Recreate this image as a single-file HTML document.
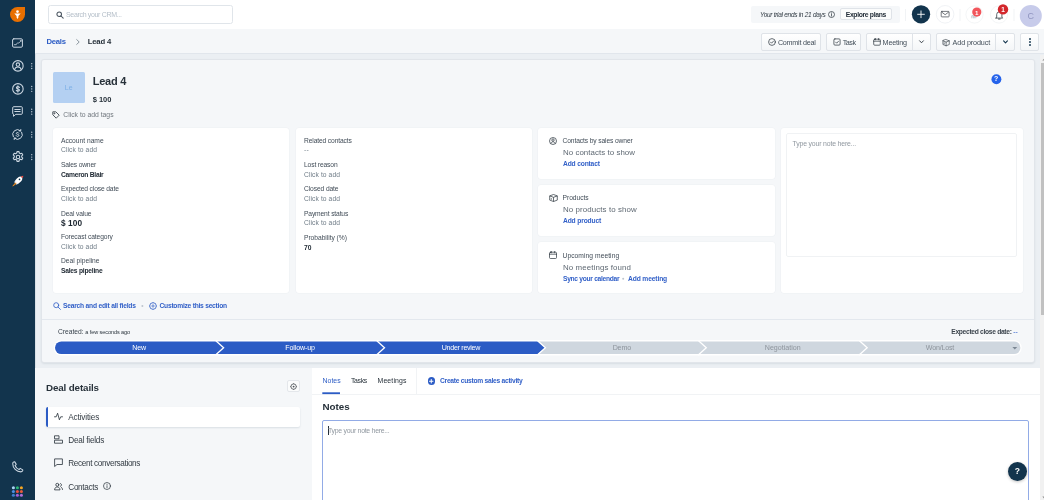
<!DOCTYPE html>
<html lang="en"><head>
<meta charset="utf-8">
<title>Lead 4 - Deals</title>
<style>
*{box-sizing:border-box;margin:0;padding:0}
html,body{width:1044px;height:500px;overflow:hidden;background:#ebeff3}
body{font-family:"Liberation Sans",sans-serif;color:#12344d;position:relative;font-size:7px;line-height:1}
.a{position:absolute}
.t{position:absolute;white-space:nowrap;line-height:10px;height:10px}
svg{position:absolute;overflow:visible}
#root{position:absolute;left:0;top:0;width:1044px;height:500px;overflow:hidden;will-change:transform}
/* sidebar */
#side{left:0;top:0;width:35px;height:500px;background:#12344d;box-shadow:1px 0 0 rgba(18,52,77,.08)}
#side svg{stroke:#cdd8e3;fill:none;stroke-width:1;stroke-linecap:round;stroke-linejoin:round}
/* top bar */
#top{left:35px;top:0;width:1009px;height:29px;background:#fff}
#search{left:48.3px;top:5px;width:184.7px;height:18.5px;border:1px solid #e0e5ea;border-radius:2.5px;background:#fff}
#crumb{left:35px;top:29px;width:1009px;height:24.5px;background:#f5f7f9;border-bottom:1px solid #e1e6ec}
.btn{position:absolute;top:33px;height:17.6px;border:1px solid #dfe3e8;border-radius:2px;background:#f8f9fa;background:linear-gradient(#fff,#f4f6f8)}
.btn .t{top:3.8px;font-size:7.2px;color:#434e59}
/* main card */
#card{left:42px;top:60px;width:992px;height:302px;background:#f5f7f9;border-radius:2px;box-shadow:0 0 0 1px #e1e5ea,0 1px 2.5px rgba(18,52,77,.22)}
.wc{position:absolute;background:#fff;border-radius:3px;box-shadow:0 0 0 .6px #eef1f4}
.lab{font-size:6.7px;color:#414c57}
.val{font-size:6.7px;color:#6f7c87}
.bval{font-size:6.7px;color:#1c2630;font-weight:bold}
.emp{font-size:7.9px;color:#5f6973}
.lnk{font-size:6.7px;color:#3260c8;font-weight:bold}
.ph{font-size:6.9px;color:#8f979f}
.stg{position:absolute;top:342.4px;height:12.7px;line-height:12.7px;text-align:center;font-size:7.1px;color:#fff;white-space:nowrap}
.stg.g{color:#8d949c}
.li{font-size:8.2px;color:#333b43}
</style>
</head>
<body>
<div id="root">
<!-- ============ SIDEBAR ============ -->
<div id="side" class="a">
  <!-- logo -->
  <svg style="left:10px;top:7px" width="15" height="15" viewBox="0 0 15 15"><path d="M7.5 0H15V7.5A7.5 7.5 0 1 1 7.5 0Z" fill="#e86f00" stroke="none"></path><circle cx="7.5" cy="4.6" r="1.3" fill="#fff" stroke="none"></circle><path d="M4.3 6.6h6.4L8.4 9v1.4L7.5 12l-.9-1.6V9Z" fill="#fff" stroke="none"></path></svg>
  <!-- dashboard -->
  <svg style="left:12px;top:38px" width="11" height="10" viewBox="0 0 11 10"><rect x=".6" y=".8" width="9.8" height="8.4" rx="1.2"></rect><path d="M2.5 6.7h1.4M4.3 6.2l1.2-1.1h1.2l1.3-1.3" stroke-width=".85"></path><circle cx="8.7" cy="2.9" r=".45" stroke-width=".8"></circle></svg>
  <!-- contacts -->
  <svg style="left:11.6px;top:60.1px" width="11.8" height="11.8" viewBox="0 0 11 11"><circle cx="5.5" cy="5.5" r="4.9"></circle><circle cx="5.5" cy="4.3" r="1.6"></circle><path d="M2.4 9c.4-1.7 1.6-2.5 3.1-2.5S8.2 7.3 8.6 9"></path></svg>
  <!-- deals -->
  <svg style="left:11.6px;top:82.9px" width="11.8" height="11.8" viewBox="0 0 11 11"><circle cx="5.5" cy="5.5" r="4.9"></circle><path d="M6.9 4.1c-.3-.6-.8-.8-1.4-.8-.8 0-1.4.4-1.4 1.1 0 1.5 2.9.7 2.9 2.2 0 .7-.7 1.1-1.5 1.1-.7 0-1.2-.3-1.5-.9M5.5 2.5v6"></path></svg>
  <!-- chat -->
  <svg style="left:12px;top:106px" width="11" height="11" viewBox="0 0 11 11"><path d="M.7 1.6a.9.9 0 0 1 .9-.9h7.8a.9.9 0 0 1 .9.9v5.8a.9.9 0 0 1-.9.9H3.8L1.5 10.3V8.3a.9.9 0 0 1-.8-.9Z"></path><path d="M2.8 3.5h5.4M2.8 5.5h5.4"></path></svg>
  <!-- automation -->
  <svg style="left:12px;top:129px" width="11" height="11" viewBox="0 0 11 11"><path d="M1.3 7.8A4.8 4.8 0 0 1 8.6 1.8M9.7 3.2A4.8 4.8 0 0 1 2.4 9.2"></path><path d="M8.8.5l-.1 1.5-1.5-.1M2.2 10.5l.1-1.5 1.5.1"></path><path d="M6.8 4.2c-.3-.5-.7-.7-1.3-.7-.7 0-1.2.4-1.2.9 0 1.3 2.6.6 2.6 2 0 .6-.6 1-1.4 1-.6 0-1.1-.3-1.4-.8"></path></svg>
  <!-- settings -->
  <svg style="left:11.5px;top:151.2px" width="12" height="12" viewBox="0 0 11 11" stroke-width=".95"><path d="M4.6.6h1.8l.3 1.3 1 .6 1.3-.4.9 1.5-1 .9v1.1l1 .9-.9 1.5-1.3-.4-1 .6-.3 1.3H4.6l-.3-1.3-1-.6-1.3.4-.9-1.5 1-.9V4.5l-1-.9.9-1.5 1.3.4 1-.6Z"></path><circle cx="5.5" cy="5.5" r="1.6"></circle></svg>
  <svg style="left:0;top:0" width="35" height="500" viewBox="0 0 35 500"><g stroke="none" fill="#b4c1ce"><circle cx="31.7" cy="63.65" r=".72"></circle><circle cx="31.7" cy="66.10" r=".72"></circle><circle cx="31.7" cy="68.55" r=".72"></circle><circle cx="31.7" cy="86.45" r=".72"></circle><circle cx="31.7" cy="88.90" r=".72"></circle><circle cx="31.7" cy="91.35" r=".72"></circle><circle cx="31.7" cy="109.25" r=".72"></circle><circle cx="31.7" cy="111.70" r=".72"></circle><circle cx="31.7" cy="114.15" r=".72"></circle><circle cx="31.7" cy="132.15" r=".72"></circle><circle cx="31.7" cy="134.60" r=".72"></circle><circle cx="31.7" cy="137.05" r=".72"></circle><circle cx="31.7" cy="154.65" r=".72"></circle><circle cx="31.7" cy="157.10" r=".72"></circle><circle cx="31.7" cy="159.55" r=".72"></circle></g></svg>
  <!-- rocket -->
  <svg style="left:11.5px;top:174.5px" width="12" height="12" viewBox="0 0 12 12"><g stroke="none"><ellipse cx="6.6" cy="5.3" rx="4.4" ry="2.5" transform="rotate(-45 6.6 5.3)" fill="#fff"></ellipse><path d="M3.7 5.3L1.8 7.6l2.4-.3ZM6.6 8.2L4.3 10.1l.3-2.4Z" fill="#e9eef3"></path><path d="M8.7 1.5C9.6 1 10.6.8 11.3.7c0 .7-.3 1.7-.8 2.6Z" fill="#e8534a"></path><circle cx="7.5" cy="4.4" r=".8" fill="#12344d"></circle><path d="M3.3 8.1L.8 11.1l3-2.3Z" fill="#f28b1d" stroke="#f28b1d" stroke-width=".8" stroke-linejoin="round"></path></g></svg>
  <!-- phone -->
  <svg style="left:11.7px;top:461.2px" width="11.6" height="11.6" viewBox="0 0 11 11"><path d="M2.6.8L4 3.2 2.9 4.3c.6 1.6 2.2 3.2 3.8 3.8L7.8 7l2.4 1.4c.2.9-.6 1.9-1.7 1.9C4.3 10.3.7 6.7.7 2.5c0-1.1 1-1.9 1.9-1.7Z"></path></svg>
  <!-- apps grid -->
  <svg style="left:0;top:0" width="35" height="500" viewBox="0 0 35 500"><g stroke="none"><circle cx="13.4" cy="487.7" r="1.550" fill="#a9d3f5"></circle><circle cx="17.4" cy="487.7" r="1.550" fill="#2bb673"></circle><circle cx="21.4" cy="487.7" r="1.550" fill="#f5a623"></circle><circle cx="13.4" cy="491.5" r="1.550" fill="#4a90e2"></circle><circle cx="17.4" cy="491.5" r="1.550" fill="#e8503a"></circle><circle cx="21.4" cy="491.5" r="1.550" fill="#ea5b3a"></circle><circle cx="13.4" cy="495.3" r="1.550" fill="#3f7fd0"></circle><circle cx="17.4" cy="495.3" r="1.550" fill="#a75ed6"></circle><circle cx="21.4" cy="495.3" r="1.550" fill="#b06fd8"></circle></g></svg>
</div>

<!-- ============ TOP BAR ============ -->
<div id="top" class="a"></div>
<div id="search" class="a"></div>
<svg style="left:55.5px;top:10.5px" width="8" height="8" viewBox="0 0 8 8" fill="none" stroke="#4a5560" stroke-width="1.05" stroke-linecap="round"><circle cx="3.2" cy="3.2" r="2.3"></circle><path d="M5 5l2.2 2.2"></path></svg>
<div class="t ph" style="left: 66px; top: 9.5px; font-size: 7px; color: rgb(180, 190, 200); letter-spacing: -0.33px;">Search your CRM...</div>

<div class="a" style="left:751px;top:5.5px;width:149px;height:17.5px;background:#f5f7f9;border-radius:2px"></div>
<div class="t" style="left: 760px; top: 9.9px; font-size: 6.5px; font-style: italic; color: rgb(47, 57, 66); letter-spacing: -0.29px;">Your trial ends in 21 days</div>
<svg style="left:827.5px;top:11px" width="7" height="7" viewBox="0 0 7 7" fill="none" stroke="#27313a" stroke-width=".7"><circle cx="3.5" cy="3.5" r="3"></circle><path d="M3.5 3.2v1.9M3.5 1.9v.3" stroke-linecap="round"></path></svg>
<div class="a" style="left:839.5px;top:8px;width:52px;height:12.3px;background:#fbfcfc;border:1px solid #dfe3e8;border-radius:2px"></div>
<div class="t" style="left: 845.7px; top: 9.6px; font-size: 6.8px; font-weight: bold; color: rgb(31, 42, 53); letter-spacing: -0.33px;">Explore plans</div>
<svg style="left:0;top:0" width="1044" height="29" viewBox="0 0 1044 29">
  <g stroke="#f1f3f5" stroke-width="1"><path d="M905.5 9v12M960 9v12M1014 9v12"></path></g>
  <circle cx="921" cy="14.3" r="9.150" fill="#12344d"></circle>
  <path d="M921 10.9v6.8M917.6 14.3h6.8" fill="none" stroke="#fff" stroke-width=".9" stroke-linecap="round"></path>
  <circle cx="945.1" cy="14.3" r="8.8" fill="#fff" stroke="#eceff2" stroke-width=".8"></circle>
  <g fill="none" stroke="#4a4f55" stroke-width=".75" stroke-linejoin="round" stroke-linecap="round"><rect x="941.2" y="11.4" width="7.9" height="5.5" rx=".7"></rect><path d="M941.7 12.1l3.450 2.6 3.450-2.6"></path></g>
  <circle cx="974.5" cy="14.5" r="8.6" fill="#fff" stroke="#f0f2f4" stroke-width=".8"></circle>
  <path d="M971.8 18.3v-2.6h1.5v2.6M974.3 18.3v-3.4h1.5v3.4" fill="none" stroke="#a9b2bb" stroke-width=".7"></path>
  <circle cx="976.8" cy="12.1" r="4.6" fill="#f2555b"></circle>
  <circle cx="999" cy="14.5" r="8.6" fill="#fff" stroke="#f0f2f4" stroke-width=".8"></circle>
  <path d="M996.7 17.2v-2.7a2.6 2.6 0 0 1 5.2 0v2.7l.8.9h-6.8ZM998.5 19.1h1.6" fill="none" stroke="#27313a" stroke-width=".75" stroke-linejoin="round" stroke-linecap="round"></path>
  <circle cx="1003" cy="9.4" r="5.2" fill="#d3272c"></circle>
  <circle cx="1030.8" cy="15.9" r="11" fill="#c7cbea"></circle>
</svg>
<div class="t" style="left:971.8px;top:7.5px;width:10px;text-align:center;font-size:6.2px;font-weight:bold;color:#fff">1</div>
<div class="t" style="left:998px;top:4.6px;width:10px;text-align:center;font-size:6.5px;font-weight:bold;color:#fff">1</div>
<div class="t" style="left:1019.8px;top:10.8px;width:22px;text-align:center;font-size:9px;color:#9196c0">C</div>

<!-- ============ BREADCRUMB BAR ============ -->
<div id="crumb" class="a"></div>
<div class="t" style="left: 46.5px; top: 36.8px; font-size: 7.7px; font-weight: bold; color: rgb(44, 92, 197); letter-spacing: -0.27px;">Deals</div>
<svg style="left:75.5px;top:38.8px" width="4" height="6" viewBox="0 0 4 6" fill="none" stroke="#6f7c87" stroke-width=".8" stroke-linecap="round" stroke-linejoin="round"><path d="M.7.6L3.2 3 .7 5.4"></path></svg>
<div class="t" style="left: 87.7px; top: 36.5px; font-size: 7.7px; font-weight: bold; color: rgb(39, 49, 58); letter-spacing: -0.15px;">Lead 4</div>

<div class="btn" style="left:761.3px;width:59.7px"><svg style="left:5.5px;top:4px" width="8" height="8" viewBox="0 0 8 8" fill="none" stroke="#27313a" stroke-width=".7" stroke-linecap="round" stroke-linejoin="round"><circle cx="4" cy="4" r="3.4"></circle><path d="M2.5 4.1l1.1 1.1 2-2.2"></path></svg><div class="t" style="left: 15.6px; letter-spacing: -0.24px;">Commit deal</div></div>
<div class="btn" style="left:826.2px;width:34.7px"><svg style="left:5.5px;top:4px" width="8" height="8" viewBox="0 0 8 8" fill="none" stroke="#27313a" stroke-width=".7" stroke-linecap="round" stroke-linejoin="round"><rect x=".9" y=".9" width="6.2" height="6.2" rx="1"></rect><path d="M2.6 4.1l1.1 1.1 1.8-2"></path></svg><div class="t" style="left: 15.6px; letter-spacing: -0.51px;">Task</div></div>
<div class="btn" style="left:866px;width:46.5px;border-radius:2px 0 0 2px"><svg style="left:5.5px;top:4px" width="8" height="8" viewBox="0 0 8 8" fill="none" stroke="#27313a" stroke-width=".7" stroke-linecap="round" stroke-linejoin="round"><rect x=".7" y="1.2" width="6.6" height="6" rx="1"></rect><path d="M.7 3.2h6.6M2.4.5v1.3M5.6.5v1.3"></path></svg><div class="t" style="left: 15.6px; letter-spacing: -0.2px;">Meeting</div></div>
<div class="btn" style="left:911.5px;width:19px;border-radius:0 2px 2px 0"><svg style="left:6.5px;top:6px" width="5" height="4" viewBox="0 0 5 4" fill="none" stroke="#27313a" stroke-width=".9" stroke-linecap="round" stroke-linejoin="round"><path d="M.6.8L2.5 2.8 4.4.8"></path></svg></div>
<div class="btn" style="left:936px;width:59.5px;border-radius:2px 0 0 2px"><svg style="left:5.3px;top:4.6px" width="8.2" height="7.4" viewBox="0 0 9 9" preserveAspectRatio="none" fill="none" stroke="#27313a" stroke-width=".7" stroke-linecap="round" stroke-linejoin="round"><path d="M4.5.7L8 2.2v4.5L4.5 8.3 1 6.7V2.2ZM1 2.2l3.5 1.6L8 2.2M4.5 3.8v4.5"></path><path d="M2.4 4.6v1.5"></path></svg><div class="t" style="left: 15.6px; letter-spacing: -0.12px;">Add product</div></div>
<div class="btn" style="left:994.5px;width:20.3px;border-radius:0 2px 2px 0"><svg style="left:7px;top:6px" width="5" height="4" viewBox="0 0 5 4" fill="none" stroke="#12344d" stroke-width="1.1" stroke-linecap="round" stroke-linejoin="round"><path d="M.6.8L2.5 2.8 4.4.8"></path></svg></div>
<div class="btn" style="left:1020px;width:18.8px"><svg style="left:7.7px;top:4px" width="2" height="8" viewBox="0 0 2 8" fill="#12344d"><circle cx="1" cy="1" r=".95"></circle><circle cx="1" cy="4" r=".95"></circle><circle cx="1" cy="7" r=".95"></circle></svg></div>

<!-- ============ MAIN CARD ============ -->
<div id="card" class="a"></div>
<div class="a" style="left:52.5px;top:72px;width:32.5px;height:31px;background:#b4d0f2;border-radius:1.5px"></div>
<div class="t" style="left:52.5px;top:82.5px;width:32.5px;text-align:center;font-size:7px;color:#7fb0e6">Le</div>
<div class="t" style="left: 92.8px; top: 74px; height: 14px; line-height: 14px; font-size: 11px; font-weight: bold; color: rgb(39, 49, 58); letter-spacing: -0.26px;">Lead 4</div>
<div class="t" style="left: 92.8px; top: 94.5px; font-size: 7.5px; font-weight: bold; color: rgb(39, 49, 58); letter-spacing: -0.05px;">$ 100</div>
<svg style="left:52px;top:111px" width="8" height="8" viewBox="0 0 8 8" fill="none" stroke="#27313a" stroke-width=".8" stroke-linejoin="round"><path d="M.8.8h3l3.4 3.4-3 3L.8 3.8Z"></path><circle cx="2.4" cy="2.4" r=".5"></circle></svg>
<div class="t" style="left: 63.3px; top: 109.5px; font-size: 6.8px; color: rgb(112, 119, 126); letter-spacing: 0px;">Click to add tags</div>
<!-- help ? -->
<svg style="left:990px;top:73px" width="13" height="13" viewBox="0 0 13 13"><circle cx="6.4" cy="6.2" r="4.950" fill="#2563eb"></circle></svg>
<div class="t" style="left:991.5px;top:74.3px;width:9.5px;text-align:center;font-size:7px;font-weight:bold;color:#fff">?</div>

<!-- white cards -->
<div class="wc" style="left:52.5px;top:127.5px;width:236.5px;height:165.2px"></div>
<div class="wc" style="left:295.7px;top:127.5px;width:236px;height:165.2px"></div>
<div class="wc" style="left:537.7px;top:127.5px;width:237.3px;height:51.2px"></div>
<div class="wc" style="left:537.7px;top:184.6px;width:237.3px;height:51.4px"></div>
<div class="wc" style="left:537.7px;top:241.5px;width:237.3px;height:51.2px"></div>
<div class="wc" style="left:781px;top:127.5px;width:242px;height:165.2px"></div>
<div class="a" style="left:786.3px;top:133.3px;width:230.7px;height:123.7px;border:1px solid #f0f2f4;border-radius:2px"></div>
<div class="t ph" style="left: 792.5px; top: 138.5px; letter-spacing: -0.16px;">Type your note here...</div>

<!-- col 1 -->
<div class="t lab" style="left: 61px; top: 136.3px; letter-spacing: -0.01px;">Account name</div>
<div class="t val" style="left: 61px; top: 145px; letter-spacing: 0.09px;">Click to add</div>
<div class="t lab" style="left: 61px; top: 159.5px; letter-spacing: -0.16px;">Sales owner</div>
<div class="t bval" style="left: 61px; top: 170.3px; letter-spacing: -0.26px;">Cameron Blair</div>
<div class="t lab" style="left: 61px; top: 184px; letter-spacing: -0.13px;">Expected close date</div>
<div class="t val" style="left: 61px; top: 193.7px; letter-spacing: 0.09px;">Click to add</div>
<div class="t lab" style="left: 61px; top: 209px; letter-spacing: -0.12px;">Deal value</div>
<div class="t bval" style="left: 61px; top: 217.5px; font-size: 8.3px; letter-spacing: 0.06px;">$ 100</div>
<div class="t lab" style="left: 61px; top: 231.5px; letter-spacing: -0.1px;">Forecast category</div>
<div class="t val" style="left: 61px; top: 242.3px; letter-spacing: 0.09px;">Click to add</div>
<div class="t lab" style="left: 61px; top: 255.7px; letter-spacing: -0.01px;">Deal pipeline</div>
<div class="t bval" style="left: 61px; top: 265.5px; letter-spacing: -0.23px;">Sales pipeline</div>
<!-- col 2 -->
<div class="t lab" style="left: 304px; top: 136.3px; letter-spacing: -0.13px;">Related contacts</div>
<div class="t val" style="left:304px;top:145px;letter-spacing:.3px">--</div>
<div class="t lab" style="left: 304px; top: 159.5px; letter-spacing: -0.13px;">Lost reason</div>
<div class="t val" style="left: 304px; top: 170.3px; letter-spacing: 0.09px;">Click to add</div>
<div class="t lab" style="left: 304px; top: 184px; letter-spacing: -0.11px;">Closed date</div>
<div class="t val" style="left: 304px; top: 193.7px; letter-spacing: 0.09px;">Click to add</div>
<div class="t lab" style="left: 304px; top: 209px; letter-spacing: -0.14px;">Payment status</div>
<div class="t val" style="left: 304px; top: 218px; letter-spacing: 0.09px;">Click to add</div>
<div class="t lab" style="left: 304px; top: 232.5px; letter-spacing: -0.04px;">Probability (%)</div>
<div class="t bval" style="left: 304px; top: 243.3px; letter-spacing: 0.05px;">70</div>
<!-- col 3 -->
<svg style="left:549px;top:136.5px" width="8" height="8" viewBox="0 0 8 8" fill="none" stroke="#27313a" stroke-width=".7"><circle cx="4" cy="4" r="3.5"></circle><circle cx="4" cy="3.1" r="1.2"></circle><path d="M1.8 6.6c.3-1.2 1.1-1.8 2.2-1.8s1.9.6 2.2 1.8"></path></svg>
<div class="t lab" style="left: 562.5px; top: 136.3px; letter-spacing: -0.12px;">Contacts by sales owner</div>
<div class="t emp" style="left: 563px; top: 147.7px; letter-spacing: 0.05px;">No contacts to show</div>
<div class="t lnk" style="left: 563px; top: 158.5px; letter-spacing: -0.17px;">Add contact</div>
<svg style="left:549px;top:193.5px" width="9" height="8" viewBox="0 0 9 8" fill="none" stroke="#27313a" stroke-width=".7" stroke-linejoin="round"><path d="M4.5.5L8.3 1.9v4.2L4.5 7.5.7 6.1V1.9ZM.7 1.9l3.8 1.4 3.8-1.4M4.5 3.3v4.2"></path><path d="M2.3 4.2v1.5"></path></svg>
<div class="t lab" style="left: 562.5px; top: 193.3px; letter-spacing: -0.03px;">Products</div>
<div class="t emp" style="left: 563px; top: 204.7px; letter-spacing: 0.1px;">No products to show</div>
<div class="t lnk" style="left: 563px; top: 215.5px; letter-spacing: -0.15px;">Add product</div>
<svg style="left:549px;top:250.5px" width="8" height="8" viewBox="0 0 8 8" fill="none" stroke="#27313a" stroke-width=".7" stroke-linejoin="round" stroke-linecap="round"><rect x=".5" y="1.2" width="7" height="6.3" rx="1"></rect><path d="M.5 3.2h7M2.3.4v1.4M5.7.4v1.4"></path></svg>
<div class="t lab" style="left: 562.5px; top: 250.7px; letter-spacing: 0.06px;">Upcoming meeting</div>
<div class="t emp" style="left: 563px; top: 262.8px; letter-spacing: 0.11px;">No meetings found</div>
<div class="t lnk" style="left: 563px; top: 274.1px; letter-spacing: -0.3px;">Sync your calendar</div>
<svg style="left:620px;top:276px" width="6" height="6" viewBox="0 0 6 6"><circle cx="3.2" cy="2.8" r="1" fill="#bcc5ce"></circle></svg>
<div class="t lnk" style="left: 628px; top: 274.1px; letter-spacing: -0.13px;">Add meeting</div>

<!-- links row -->
<svg style="left:52.5px;top:302px" width="8" height="8" viewBox="0 0 8 8" fill="none" stroke="#2c5cc5" stroke-width=".8" stroke-linecap="round"><circle cx="3.2" cy="3.2" r="2.5"></circle><path d="M5.1 5.1l2.3 2.3"></path></svg>
<div class="t lnk" style="left: 63px; top: 300.7px; letter-spacing: -0.22px;">Search and edit all fields</div>
<svg style="left:139px;top:303px" width="6" height="6" viewBox="0 0 6 6"><circle cx="3.4" cy="2.9" r="1" fill="#bcc5ce"></circle></svg>
<svg style="left:149px;top:301.8px" width="8" height="8" viewBox="0 0 8 8" fill="none" stroke="#2c5cc5" stroke-width=".7"><circle cx="4" cy="4" r="3.3" stroke-width=".8"></circle><circle cx="4" cy="4" r="1.1"></circle><path d="M4 .2v.7M4 7.1v.7M.2 4h.7M7.1 4h.7" stroke-width=".6"></path></svg>
<div class="t lnk" style="left: 159.5px; top: 300.7px; letter-spacing: -0.25px;">Customize this section</div>
<div class="a" style="left:42px;top:319px;width:992px;height:1px;background:#e3e8ee"></div>

<div class="t" style="left:58px;top:326.7px;font-size:6.7px;color:#27313a"><b style="font-weight: normal; color: rgb(58, 68, 78); letter-spacing: -0.02px;">Created:</b> <span style="font-size: 5.5px; letter-spacing: -0.07px;">a few seconds ago</span></div>
<div class="t" style="right:26px;top:326.7px;font-size:6.7px;font-weight:bold;color:#3c454e"><span style="letter-spacing: -0.31px;">Expected close date: </span><span style="color:#6e8fdc;letter-spacing:.2px">--</span></div>

<!-- pipeline -->
<svg style="left:0;top:0" width="1044" height="500" viewBox="0 0 1044 500">
  <rect x="53.7" y="340.1" width="968.0" height="15.3" rx="7.7" fill="#fff"></rect>
  <path d="M859.50 341.40H1014.05A6.35 6.35 0 0 1 1014.05 354.10H859.50Z" fill="#cfd7df"></path>
  <path d="M698.60 341.40H859.50L866.90 347.75 859.50 354.10H698.60Z" fill="#cfd7df"></path>
  <path d="M858.90 340.20L867.20 347.75 858.90 355.30" fill="none" stroke="#fff" stroke-width="1.3"></path>
  <path d="M537.70 341.40H698.60L706.00 347.75 698.60 354.10H537.70Z" fill="#cfd7df"></path>
  <path d="M698.00 340.20L706.30 347.75 698.00 355.30" fill="none" stroke="#fff" stroke-width="1.3"></path>
  <path d="M376.80 341.40H537.70L545.10 347.75 537.70 354.10H376.80Z" fill="#2c5cc5"></path>
  <path d="M537.10 340.20L545.40 347.75 537.10 355.30" fill="none" stroke="#fff" stroke-width="1.3"></path>
  <path d="M215.90 341.40H376.80L384.20 347.75 376.80 354.10H215.90Z" fill="#2c5cc5"></path>
  <path d="M376.20 340.20L384.50 347.75 376.20 355.30" fill="none" stroke="#fff" stroke-width="1.3"></path>
  <path d="M61.35 341.40H215.90L223.30 347.75 215.90 354.10H61.35A6.35 6.35 0 0 1 61.35 341.40Z" fill="#2c5cc5"></path>
  <path d="M215.30 340.20L223.60 347.75 215.30 355.30" fill="none" stroke="#fff" stroke-width="1.3"></path>
  <path d="M1012.4 346.9h4.8l-2.4 2.7Z" fill="#7b8793"></path>
</svg>
<div class="stg" style="left: 55px; width: 168.3px; letter-spacing: -0.18px;">New</div>
<div class="stg" style="left: 215.9px; width: 168.3px; letter-spacing: -0.15px;">Follow-up</div>
<div class="stg" style="left: 376.8px; width: 168.3px; letter-spacing: -0.29px;">Under review</div>
<div class="stg g" style="left: 537.7px; width: 168.3px; letter-spacing: -0.13px;">Demo</div>
<div class="stg g" style="left: 698.6px; width: 168.3px; letter-spacing: 0px;">Negotiation</div>
<div class="stg g" style="left: 859.5px; width: 160.9px; letter-spacing: -0.21px;">Won/Lost</div>

<!-- ============ LOWER LEFT ============ -->
<div class="a" style="left:35px;top:368px;width:276.5px;height:132px;background:#f5f7f9"></div>
<div class="t" style="left: 46px; top: 381px; height: 14px; line-height: 14px; font-size: 9.8px; font-weight: bold; color: rgb(39, 49, 58); letter-spacing: -0.13px;">Deal details</div>
<div class="a" style="left:287px;top:379.6px;width:12.7px;height:12.7px;border:1px solid #e4e7eb;border-radius:2px;background:#fbfcfc"></div>
<svg style="left:289.8px;top:383px" width="7.2" height="7.2" viewBox="0 0 7 7" fill="none" stroke="#4d5257" stroke-width=".8"><circle cx="3.5" cy="3.5" r="2.6"></circle><circle cx="3.5" cy="3.5" r=".9" fill="#4d5257" stroke="none"></circle><path d="M3.5 .2v.8M3.5 6v.8M.2 3.5h.8M6 3.5h.8" stroke-width=".7"></path></svg>

<div class="a" style="left:46.2px;top:407px;width:253.8px;height:20px;background:#fff;border-radius:2px;box-shadow:0 1px 2px rgba(18,52,77,.12);border-left:2.2px solid #2c5cc5"></div>
<svg style="left:54px;top:412px" width="9" height="9" viewBox="0 0 9 9" fill="none" stroke="#27313a" stroke-width=".8" stroke-linecap="round" stroke-linejoin="round"><path d="M.5 4.8h1.7L3.6 1.2 5.4 7.8 6.7 4.8h1.8"></path></svg>
<div class="t li" style="left: 68.3px; top: 412.5px; letter-spacing: -0.15px;">Activities</div>
<svg style="left:54px;top:435px" width="9" height="9" viewBox="0 0 9 9" fill="none" stroke="#27313a" stroke-width=".8" stroke-linejoin="round"><rect x=".5" y=".8" width="4.5" height="3"></rect><rect x=".5" y="5.2" width="8" height="3"></rect></svg>
<div class="t li" style="left: 68.3px; top: 436px; letter-spacing: -0.23px;">Deal fields</div>
<svg style="left:54px;top:458px" width="9" height="9" viewBox="0 0 9 9" fill="none" stroke="#27313a" stroke-width=".8" stroke-linejoin="round"><path d="M.6.9h7.8v5.6H3L.6 8.5Z"></path></svg>
<div class="t li" style="left: 68.3px; top: 459.3px; letter-spacing: -0.35px;">Recent conversations</div>
<svg style="left:54px;top:481.5px" width="9" height="9" viewBox="0 0 9 9" fill="none" stroke="#27313a" stroke-width=".8" stroke-linecap="round" stroke-linejoin="round"><circle cx="3.3" cy="2.8" r="1.5"></circle><path d="M.6 7.5c.2-1.7 1.2-2.5 2.7-2.5s2.5.8 2.7 2.5ZM6.4 1.5c.7.2 1.1.7 1.1 1.4s-.4 1.2-1.1 1.4M7.3 5.3c.7.4 1.1 1.1 1.2 2.2"></path></svg>
<div class="t li" style="left: 68.3px; top: 483px; letter-spacing: -0.33px;">Contacts</div>
<svg style="left:103px;top:482px" width="8" height="8" viewBox="0 0 8 8" fill="none" stroke="#27313a" stroke-width=".7" stroke-linecap="round"><circle cx="4" cy="4" r="3.5"></circle><path d="M4 3.7v2M4 2.3v.2"></path></svg>

<!-- ============ LOWER RIGHT ============ -->
<div class="a" style="left:312px;top:368px;width:728px;height:132px;background:#fff"></div>
<div class="a" style="left:312px;top:394px;width:728px;height:1px;background:#f1f3f5"></div>
<div class="t" style="left: 322.5px; top: 375.5px; font-size: 6.9px; color: rgb(44, 92, 197); letter-spacing: 0.05px;">Notes</div>
<svg style="left:0;top:390px" width="400" height="6" viewBox="0 0 400 6"><rect x="322.3" y="2.3" width="17.7" height="1.8" fill="#2c5cc5"></rect></svg>
<div class="t" style="left: 351px; top: 375.5px; font-size: 6.9px; color: rgb(39, 49, 58); letter-spacing: -0.35px;">Tasks</div>
<div class="t" style="left: 377.5px; top: 375.5px; font-size: 6.9px; color: rgb(39, 49, 58); letter-spacing: 0.14px;">Meetings</div>
<div class="a" style="left:416px;top:368px;width:1px;height:26px;background:#f1f3f5"></div>
<div class="a" style="left:427.5px;top:377px;width:7.5px;height:7.5px;border-radius:50%;background:#2c5cc5"></div>
<svg style="left:429px;top:378.5px" width="4.5" height="4.5" viewBox="0 0 4.5 4.5" fill="none" stroke="#fff" stroke-width="1" stroke-linecap="round"><path d="M2.250 .5v3.5M.5 2.250h3.5"></path></svg>
<div class="t lnk" style="left: 440px; top: 375.5px; letter-spacing: -0.27px;">Create custom sales activity</div>
<div class="t" style="left: 322.5px; top: 400.2px; height: 14px; line-height: 14px; font-size: 9.8px; font-weight: bold; color: rgb(39, 49, 58); letter-spacing: 0.01px;">Notes</div>
<div class="a" style="left:322px;top:420px;width:706.8px;height:90px;border:1px solid #92abe6;border-radius:2px;background:#fff"></div>
<div class="a" style="left:327.8px;top:426px;width:.7px;height:9px;background:#27313a"></div>
<div class="t ph" style="left: 328px; top: 425.5px; letter-spacing: -0.26px;">Type your note here...</div>

<!-- help fab -->
<div class="a" style="left:1007.9px;top:461.5px;width:19px;height:19px;border-radius:50%;background:#12344d;box-shadow:0 1px 3px rgba(0,0,0,.25)"></div>
<div class="t" style="left:1007.9px;top:465.8px;width:19px;text-align:center;font-size:8.5px;font-weight:bold;color:#fff">?</div>

<!-- scrollbars -->
<div class="a" style="left:1040px;top:54.5px;width:4px;height:445.5px;background:#f1f1f1"></div>
<div class="a" style="left:1041.2px;top:63px;width:3px;height:252px;background:#c1c1c1"></div>
<svg style="left:1041.5px;top:57.5px" width="3" height="3" viewBox="0 0 3 3"><path d="M.3 2.4L2.2 .6V2.4Z" fill="#8f8f8f"></path></svg>
<svg style="left:1041.5px;top:495.5px" width="3" height="3" viewBox="0 0 3 3"><path d="M.3 .6H2.5L2 2.4Z" fill="#8f8f8f"></path></svg>
</div>


</body></html>
